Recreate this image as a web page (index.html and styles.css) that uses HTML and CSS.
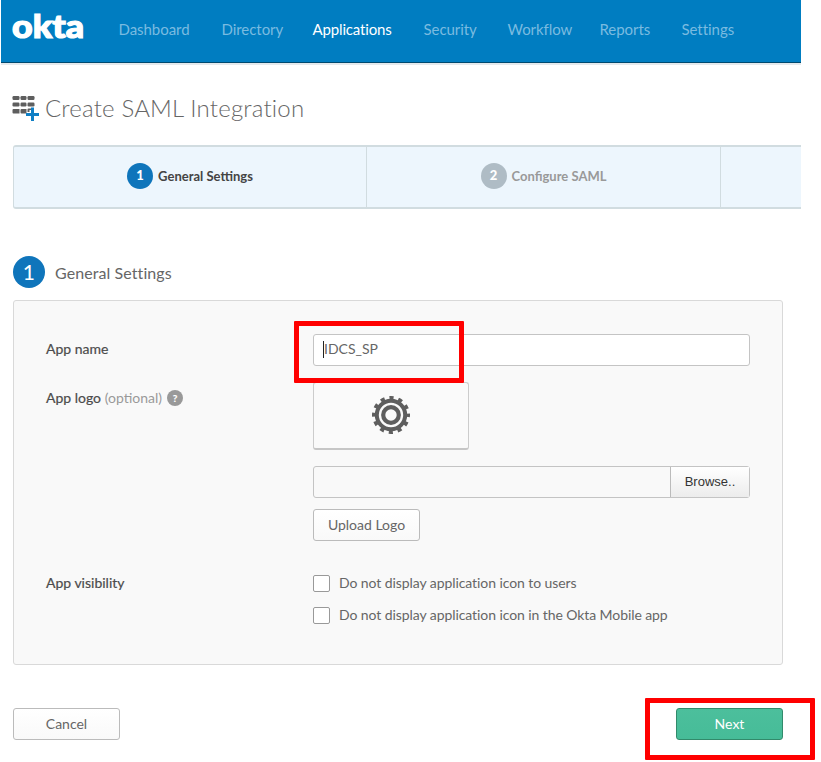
FILE: index.html
```html
<!DOCTYPE html>
<html lang="en">
<head>
<meta charset="utf-8">
<title>Create SAML Integration</title>
<link rel="stylesheet" href="styles.css">
</head>
<body>
<header class="topbar">
  <svg class="logo" width="74" height="40" viewBox="0 -4 74 40" role="img" aria-label="okta">
    <text class="logo-text" x="0" y="27" textLength="72" lengthAdjust="spacingAndGlyphs">okta</text>
  </svg>
  <nav class="nav">
    <a class="dash">Dashboard</a>
    <a class="dir">Directory</a>
    <a class="apps active">Applications</a>
    <a class="sec">Security</a>
    <a class="work">Workflow</a>
    <a class="rep">Reports</a>
    <a class="set">Settings</a>
  </nav>
</header>
<main class="page">
  <h1 class="title">
    <svg width="27" height="26" viewBox="0 0 27 26">
      <g fill="#5e5e5e">
        <rect x="0.500" y="1" width="7" height="4" rx="1.2"/><rect x="8.500" y="1" width="6" height="4" rx="1.2"/><rect x="15.500" y="1" width="7" height="4" rx="1.2"/>
        <rect x="0.500" y="7.500" width="7" height="4" rx="1.2"/><rect x="8.500" y="7.500" width="6" height="4" rx="1.2"/><rect x="15.500" y="7.500" width="7" height="4" rx="1.2"/>
        <path d="M1.500 14h6v4.500h-6a1 1 0 0 1-1-1v-2.500a1 1 0 0 1 1-1zM9.500 14h5v4.500h-5a1 1 0 0 1-1-1v-2.500a1 1 0 0 1 1-1zM16.500 13.500h2.500v1.500h-1.500v2h-2v-2.500a1 1 0 0 1 1-1z"/>
      </g>
      <path d="M20.500 12.500v13.500M14 19.500h13" stroke="#0f7fc5" stroke-width="3"/>
    </svg>
    <span>Create SAML Integration</span>
  </h1>
  <ol class="steps">
    <li class="step first current"><b class="num">1</b><span>General Settings</span></li>
    <li class="step"><b class="num">2</b><span>Configure SAML</span></li>
    <li class="step rest"></li>
  </ol>
  <h2 class="section"><span class="big">1</span><span class="section-name">General Settings</span></h2>
  <section class="panel">
    <div class="row name-row">
      <div class="label">App name</div>
      <div class="field input"><span class="caret"></span><span class="value">IDCS_SP</span></div>
      <div class="mark mark-name"></div>
    </div>
    <div class="row logo-row">
      <div class="label logo-label">App logo <span class="opt">(optional)</span><span class="help">?</span></div>
      <div class="field">
        <div class="preview">
          <svg width="40" height="40" viewBox="-20 -20 40 40">
            <circle r="14.200" fill="none" stroke="#5e5e5e" stroke-width="4"/>
            <circle r="17.200" fill="none" stroke="#5e5e5e" stroke-width="3.600" stroke-dasharray="4.200 4.806" stroke-dashoffset="2.100"/>
            <circle r="7.800" fill="none" stroke="#5e5e5e" stroke-width="4.200"/>
          </svg>
        </div>
        <div class="file"><span class="path"></span><span class="browse">Browse..</span></div>
        <button class="btn upload">Upload Logo</button>
      </div>
    </div>
    <div class="row vis-row">
      <div class="label">App visibility</div>
      <div class="field checks">
        <div class="check"><i></i><span>Do not display application icon to users</span></div>
        <div class="check"><i></i><span>Do not display application icon in the Okta Mobile app</span></div>
      </div>
    </div>
  </section>
  <footer class="actions">
    <button class="btn cancel">Cancel</button>
    <div class="next-wrap"><button class="btn next">Next</button><div class="mark mark-next"></div></div>
  </footer>
</main>
</body>
</html>
```
FILE: styles.css
```css
* { box-sizing: border-box; }
body { margin: 0; background: #fff; color: #666; font: 14px/20px Lato, "Open Sans", sans-serif; height: 762px; overflow: hidden; }
.topbar { display: flex; width: 800px; height: 63px; margin-left: 1px; padding: 11px 0 0 11px; background: #007dc1; border-bottom: 1px solid #00496f; box-shadow: 0 2px 0 #e4e9ec; }
.logo { flex: none; margin-top: -4px; overflow: visible; }
.logo-text { font: 900 32px Lato, sans-serif; fill: #fff; stroke: #fff; stroke-width: 1.2; }
.nav { display: flex; gap: 32px; margin: 8px 0 0 32.5px; font-size: 15px; letter-spacing: -.05px; color: #7abbe0; white-space: nowrap; }
.nav .active { color: #fff; letter-spacing: -.15px; }
.dash { width: 71px; } .dir { width: 59px; } .apps { width: 79px; } .sec { width: 52px; } .work { width: 60px; } .rep { width: 50px; } .set { width: 52px; }
.page { padding: 32px 0 0 13px; }
.title { display: flex; align-items: center; gap: 6px; height: 26px; margin: 0 0 0 -1px; font-weight: 300; font-size: 24px; line-height: 26px; letter-spacing: .18px; }
.steps { display: flex; width: 788px; height: 64px; margin: 24px 0 0; padding: 0; list-style: none; background: #edf6fd; border: 2px solid #d1dce0; border-left-width: 1px; border-right: 0; border-radius: 3px 0 0 3px; }
.step { display: flex; align-items: center; justify-content: center; gap: 5px; width: 354px; padding-bottom: 2px; border-right: 1px solid #d1dce0; font-size: 13px; font-weight: 700; color: #999; }
.step.first { width: 353px; }
.step span { padding-bottom: 1px; }
.step.rest { width: 80px; border: 0; }
.step.current { color: #444; }
.num { width: 26px; height: 26px; border-radius: 50%; background: #afbcc5; color: #fff; text-align: center; line-height: 25px; }
.current .num { background: #0f75bb; }
.section { display: flex; align-items: center; gap: 10px; height: 32px; margin: 47px 0 0; font-size: 16px; font-weight: 400; letter-spacing: .08px; }
.big { width: 32px; height: 32px; border-radius: 50%; background: #0f75bb; color: #fff; text-align: center; font-size: 21px; line-height: 31px; }
.section-name { padding-top: 1px; }
.panel { width: 770px; height: 365px; margin-top: 12px; padding: 33px 0 0 32px; background: #f9f9f9; border: 1px solid #d9d9d9; border-radius: 3px; }
.row { display: flex; position: relative; }
.label { width: 267px; flex: none; font-weight: 400; color: #4c4c4c; -webkit-text-stroke: .2px; }
.name-row .label { padding-top: 5px; }
.field { width: 437px; }
.input { display: flex; align-items: center; height: 32px; padding: 0 0 2px 9px; background: #fff; border: 1px solid #c4c4c4; border-radius: 3px; }
.caret { width: 1px; height: 17px; background: #222; }
.logo-row { margin-top: 16px; }
.logo-label { display: flex; align-items: center; height: 31px; white-space: pre; }
.opt { color: #999; -webkit-text-stroke: 0; }
.help { width: 16px; height: 16px; margin-left: 5px; border-radius: 50%; background: #999; color: #fff; text-align: center; font-size: 10px; font-weight: 700; line-height: 16px; }
.preview { display: flex; align-items: center; justify-content: center; width: 156px; height: 68px; padding-bottom: 1px; border: 1px solid #ccc; border-bottom: 2px solid #c6c6c6; border-radius: 3px; background: #fafafa; }
.file { display: flex; height: 32px; margin-top: 16px; border: 1px solid #c4c4c4; border-radius: 3px; }
.path { flex: 1; }
.browse { width: 79px; border-left: 1px solid #bbb; background: linear-gradient(#fff, #ececec); color: #333; text-align: center; font: 13px/30px "Liberation Sans", sans-serif; }
.btn { display: block; height: 32px; width: 107px; padding: 0; border: 1px solid #bbb; border-radius: 3px; background: linear-gradient(#fff, #f9f9f9); color: #666; font: 14px/28px Lato, sans-serif; }
.upload { margin-top: 11px; }
.vis-row { margin-top: 32px; }
.checks { display: grid; gap: 12px; padding-top: 0; }
.check { display: flex; align-items: center; gap: 9px; height: 20px; letter-spacing: -.08px; white-space: nowrap; }
.check i { width: 17px; height: 17px; border: 1px solid #999; border-radius: 2px; background: #fff; }
.actions { display: flex; justify-content: space-between; width: 770px; margin-top: 43px; }
.next-wrap { position: relative; }
.btn.next { border-color: #328a6b; background: linear-gradient(#4cbf9c, #46bc98); color: #fff; }
.mark { position: absolute; z-index: 2; width: 170px; height: 62px; border: 5px solid #f00; border-radius: 1px; }
.mark-name { left: 248px; top: -13px; }
.mark-next { left: -31px; top: -10px; }
```
